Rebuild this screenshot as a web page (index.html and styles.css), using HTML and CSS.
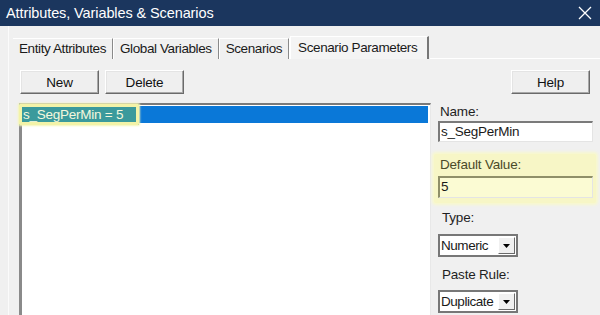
FILE: index.html
```html
<!DOCTYPE html>
<html>
<head>
<meta charset="utf-8">
<link rel="stylesheet" href="styles.css">
</head>
<body>
<div class="titlebar">
  <span class="title">Attributes, Variables &amp; Scenarios</span>
  <svg class="close" width="14" height="14" viewBox="0 0 14 14"><path d="M1 1L13 13M13 1L1 13" stroke="#ffffff" stroke-width="1.3"/></svg>
</div>
<div class="dialog">
  <div class="tabs">
    <div class="tab">Entity Attributes</div>
    <div class="tab">Global Variables</div>
    <div class="tab">Scenarios</div>
    <div class="tab active">Scenario Parameters</div>
    <div class="tabfill"></div>
  </div>
  <div class="panel">
    <div class="leftcol">
      <div class="btnrow">
        <button class="btn">New</button>
        <button class="btn">Delete</button>
      </div>
      <div class="listbox">
        <div class="item selected"><span class="hl">s_SegPerMin = 5</span></div>
      </div>
    </div>
    <div class="rightcol">
      <div class="helprow"><button class="btn">Help</button></div>
      <div class="field name">
        <div class="label">Name:</div>
        <div class="input">s_SegPerMin</div>
      </div>
      <div class="field highlight">
        <div class="label">Default Value:</div>
        <div class="input yellow">5</div>
      </div>
      <div class="field type">
        <div class="label ind">Type:</div>
        <div class="select"><span class="val">Numeric</span><span class="arrow"><svg width="7" height="4" viewBox="0 0 7 4"><path d="M0 0H7L3.5 4Z" fill="#000"/></svg></span></div>
      </div>
      <div class="field paste">
        <div class="label ind">Paste Rule:</div>
        <div class="select"><span class="val">Duplicate</span><span class="arrow"><svg width="7" height="4" viewBox="0 0 7 4"><path d="M0 0H7L3.5 4Z" fill="#000"/></svg></span></div>
      </div>
    </div>
  </div>
</div>
</body>
</html>
```
FILE: styles.css
```css
html, body {
  margin: 0;
  padding: 0;
}
body {
  width: 600px;
  height: 315px;
  overflow: hidden;
  background: #f0f0f0;
  font-family: "Liberation Sans", Arial, sans-serif;
  font-size: 13.5px;
  color: #1a1a1a;
}
.titlebar {
  height: 26px;
  background: #1b365e;
  display: flex;
  align-items: center;
  justify-content: space-between;
  padding: 0 8px 0 6px;
  color: #ffffff;
}
.title {
  font-size: 14.5px;
  letter-spacing: -0.1px;
}
.dialog {
  margin-left: 8px;
  border-left: 1px solid #fbfbfb;
  height: 289px;
  padding-top: 10px;
  box-sizing: border-box;
}
.tabs {
  display: flex;
  align-items: flex-end;
  height: 23px;
  padding-left: 4px;
}
.tab {
  height: 21px;
  line-height: 20px;
  padding: 0 6px 0 6px;
  border-right: 1px solid #8a8a8a;
  box-shadow: 1px 0 0 #ffffff;
  border-top: 1px solid #ffffff;
  box-sizing: border-box;
  letter-spacing: -0.4px;
  background: #f0f0f0;
  margin-right: 1px;
}
.tab.active {
  height: 23px;
  line-height: 22px;
  padding: 0 10px 0 7px;
  border-left: 1px solid #ffffff;
  border-right: 2px solid #777777;
  background: #f4f4f4;
  box-shadow: none;
}
.tabfill {
  flex: 1;
  height: 1px;
  align-self: flex-end;
  background: #ffffff;
}
.panel {
  display: flex;
  padding: 11px 0 0 10px;
}
.leftcol {
  width: 412px;
  display: flex;
  flex-direction: column;
  gap: 9px;
}
.btnrow {
  display: flex;
  gap: 6px;
  padding-left: 1px;
}
.btn {
  width: 79px;
  height: 24px;
  font-family: inherit;
  font-size: 13.5px;
  color: #111;
  background: #efefef;
  border: 1px solid;
  border-color: #ffffff #6a6a6a #6a6a6a #ffffff;
  box-shadow: inset -1px -1px 0 #a8a8a8, inset 1px 1px 0 #e4e4e4;
  padding: 0;
  letter-spacing: -0.2px;
}
.listbox {
  height: 209px;
  background: #ffffff;
  border-top: 2px solid #7a7a7a;
  border-left: 3px solid #8a8a8a;
  border-right: 1px solid #e8e8e8;
  padding: 1px 2px 0 0;
}
.item.selected {
  background: #0a78d8;
  height: 17px;
  display: flex;
  align-items: center;
}
.hl {
  display: flex;
  align-items: center;
  height: 21px;
  margin-left: -3px;
  padding: 0 16px 0 4px;
  background: #3b9a9c;
  color: #f4f8de;
  outline: 3px solid #f3f3a8;
  outline-offset: -3px;
  border-radius: 1px;
  box-shadow: 0 0 2px 1px #f6f6b8;
  letter-spacing: -0.25px;
}
.rightcol {
  width: 162px;
  margin-left: 3px;
  display: flex;
  flex-direction: column;
}
.helprow {
  display: flex;
  justify-content: flex-end;
  padding-right: 6px;
}
.field {
  display: flex;
  flex-direction: column;
  padding: 0 4px;
}
.label {
  height: 18px;
  line-height: 18px;
  padding-left: 2px;
  color: #1f1f1f;
  letter-spacing: -0.2px;
}
.label.ind {
  padding-left: 4px;
}
.field.name {
  margin-top: 9px;
}
.input {
  height: 21px;
  box-sizing: border-box;
  background: #ffffff;
  border-top: 2px solid #7a7a7a;
  border-left: 2px solid #7a7a7a;
  border-right: 1px solid #e4e4e4;
  border-bottom: 1px solid #e4e4e4;
  line-height: 18px;
  padding-left: 1px;
  width: 155px;
  letter-spacing: -0.25px;
}
.field.highlight {
  margin-top: 12px;
  background: #f7f6c6;
  box-shadow: 0 0 3px 2px #f8f8cc;
  border-radius: 2px;
  padding-top: 2px;
  padding-bottom: 5px;
}
.highlight .label {
  color: #4a4a2a;
  margin-bottom: 2px;
}
.input.yellow {
  height: 22px;
  background: #fbfbd3;
  border-top-color: #8f8f68;
  border-left-color: #8f8f68;
}
.field.type {
  margin-top: 6px;
}
.field.paste {
  margin-top: 9px;
}
.select {
  margin-top: 7px;
  width: 80px;
  height: 23px;
  box-sizing: border-box;
  display: flex;
  align-items: center;
  background: #ffffff;
  border: 2px solid #777;
  letter-spacing: -0.45px;
}
.paste .select {
  margin-top: 6px;
}
.val {
  flex: 1;
  padding-left: 1px;
  overflow: hidden;
  white-space: nowrap;
}
.arrow {
  width: 17px;
  height: 17px;
  margin-right: 1px;
  display: flex;
  align-items: center;
  justify-content: center;
  background: #f0f0f0;
  border: 1px solid;
  border-color: #ffffff #6a6a6a #6a6a6a #ffffff;
  box-sizing: border-box;
  flex: none;
}
```
